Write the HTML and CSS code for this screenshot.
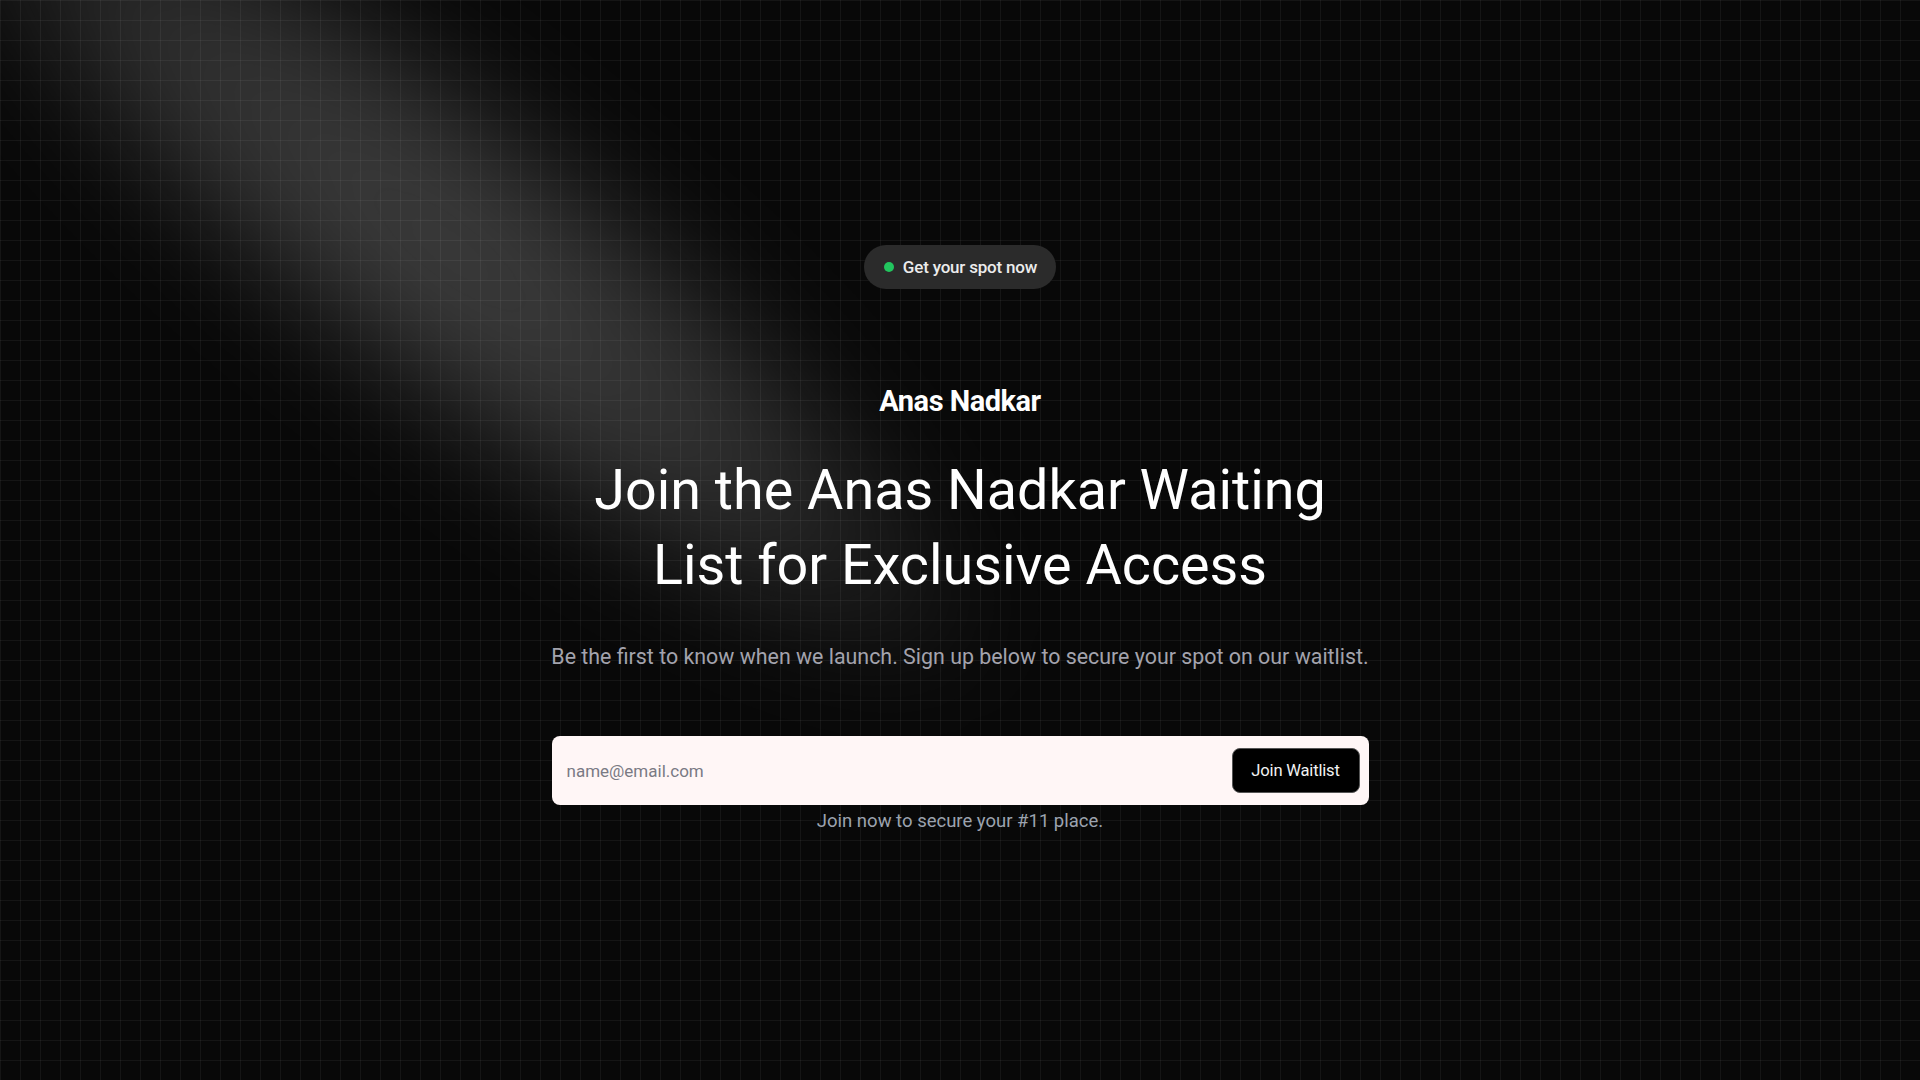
FILE: index.html
```html
<!DOCTYPE html>
<html lang="en">
<head>
<meta charset="utf-8">
<title>Anas Nadkar Waitlist</title>
<link rel="stylesheet" href="styles.css">
</head>
<body>
<main class="page">
  <div class="spotlight"></div>
  <section class="hero">
    <div class="badge"><span class="dot"></span><span class="badge-text">Get your spot now</span></div>
    <div class="brand">Anas Nadkar</div>
    <h1 class="title">Join the Anas Nadkar Waiting<br>List for Exclusive Access</h1>
    <p class="subtitle">Be the first to know when we launch. Sign up below to secure your spot on our waitlist.</p>
    <form class="signup" onsubmit="return false;">
      <input class="email" type="email" placeholder="name@email.com">
      <button class="join" type="submit">Join Waitlist</button>
    </form>
    <p class="note">Join now to secure your #11 place.</p>
  </section>
</main>
</body>
</html>
```
FILE: styles.css
```css
* { box-sizing: border-box; }
html, body { margin: 0; padding: 0; }
body {
  background: #0a0a0a;
  font-family: Roboto, "Noto Sans", sans-serif;
  color: #fff;
}
.page {
  position: relative;
  width: 100%;
  height: 100vh;
  overflow: hidden;
  background-color: #080808;
  background-image:
    linear-gradient(to right, rgba(255,255,255,0.05) 1px, transparent 1px),
    linear-gradient(to bottom, rgba(255,255,255,0.05) 1px, transparent 1px);
  background-size: 20px 20px;
}
.spotlight {
  position: absolute;
  left: -240px;
  top: 75px;
  width: 1380px;
  height: 350px;
  border-radius: 50%;
  background: radial-gradient(closest-side, rgba(255,255,255,0.22), rgba(255,255,255,0.15) 55%, rgba(255,255,255,0) 100%);
  transform: rotate(38deg);
  filter: blur(45px);
  pointer-events: none;
}
.hero {
  position: relative;
  z-index: 1;
  display: flex;
  flex-direction: column;
  align-items: center;
  padding-top: 245px;
}
.badge {
  display: flex;
  align-items: center;
  gap: 9px;
  height: 44px;
  padding: 0 19px 0 20px;
  border-radius: 22px;
  background: #2b2b2b;
}
.dot {
  width: 10px;
  height: 10px;
  border-radius: 50%;
  background: #22c55e;
}
.badge-text {
  font-size: 17px;
  font-weight: 500;
  color: #ececec;
  letter-spacing: -0.2px;
}
.brand {
  margin-top: 94px;
  font-size: 29px;
  line-height: 36px;
  font-weight: 700;
  letter-spacing: -0.5px;
  color: #fff;
}
.title {
  margin: 34px 0 0;
  font-size: 55.7px;
  line-height: 75px;
  font-weight: 400;
  text-align: center;
  color: #fff;
}
.subtitle {
  margin: 40px 0 0;
  font-size: 21.4px;
  line-height: 28px;
  color: #a3a3ad;
}
.signup {
  margin-top: 65px;
  width: 817px;
  height: 69px;
  display: flex;
  align-items: center;
  padding: 0 9px 0 13px;
  background: #fff6f6;
  border-radius: 8px;
}
.email {
  flex: 1;
  border: none;
  outline: none;
  background: transparent;
  font-family: inherit;
  font-size: 17px;
  color: #222;
}
.email::placeholder { color: #7a7a84; }
.join {
  height: 45px;
  width: 128px;
  border: 1px solid #555;
  border-radius: 8px;
  background: #000;
  color: #f2f2f2;
  font-family: inherit;
  font-size: 16.6px;
  letter-spacing: -0.2px;
}
.note {
  margin: 4px 0 0;
  font-size: 18.5px;
  line-height: 24px;
  color: #9ca3af;
}
```
